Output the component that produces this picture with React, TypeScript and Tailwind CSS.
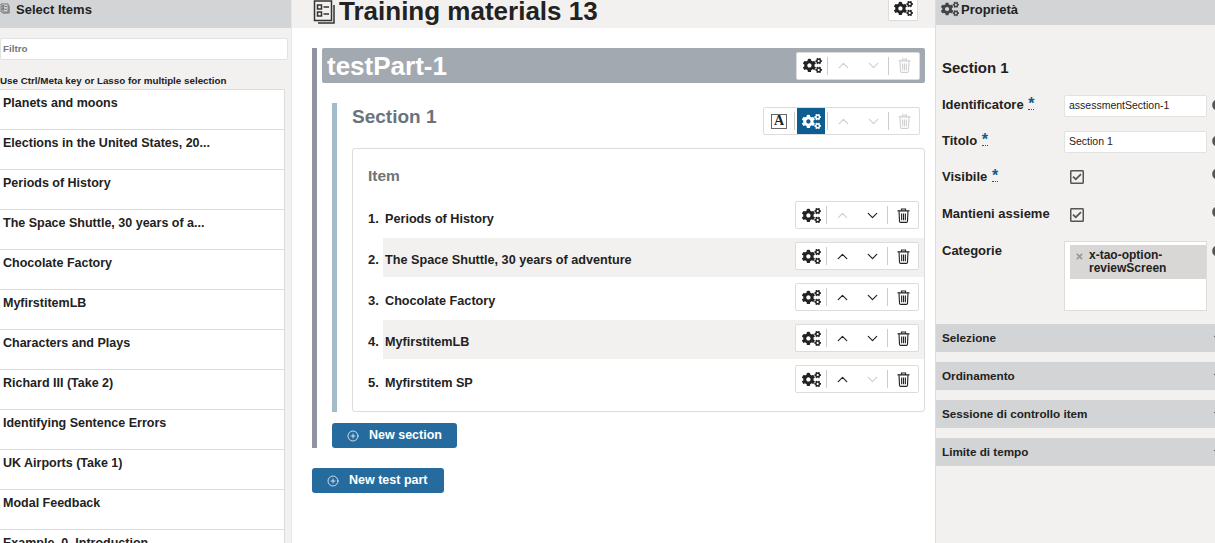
import { ChevronDown, ChevronUp, CirclePlus } from 'lucide-react';
import { FaCogs, FaQuestionCircle, FaRegCheckSquare, FaTimes } from 'react-icons/fa';

const libraryItems = [
  'Planets and moons',
  'Elections in the United States, 20...',
  'Periods of History',
  'The Space Shuttle, 30 years of a...',
  'Chocolate Factory',
  'MyfirstitemLB',
  'Characters and Plays',
  'Richard III (Take 2)',
  'Identifying Sentence Errors',
  'UK Airports (Take 1)',
  'Modal Feedback',
  'Example_0_Introduction',
];

const testItems = [
  { label: 'Periods of History', up: false, down: true },
  { label: 'The Space Shuttle, 30 years of adventure', up: true, down: true, striped: true },
  { label: 'Chocolate Factory', up: true, down: true },
  { label: 'MyfirstitemLB', up: true, down: true, striped: true },
  { label: 'Myfirstitem SP', up: true, down: false },
];

function ListIcon({ className }: { className: string }) {
  return (
    <svg viewBox="0 0 24 24" fill="none" stroke="currentColor" strokeWidth="1.5" className={className}>
      <path d="M22 5v18H6" />
      <path d="M2.5 1h17v19.5h-17z" />
      <path d="M5.5 5h4v4h-4zM5.5 12h4v4h-4zM11.5 7H17M11.5 14H17" />
    </svg>
  );
}

function TrashIcon({ className }: { className: string }) {
  return (
    <svg viewBox="0 0 14 16" fill="none" stroke="currentColor" strokeWidth="1.2" className={className}>
      <path d="M4.8 2.6V1h4.4v1.6" />
      <path d="M.6 3h12.8" strokeWidth="1.4" />
      <path d="M2.2 3.4l.5 10.8q.1 1.2 1.2 1.2h6.2q1.1 0 1.2-1.2l.5-10.8" />
      <path d="M5 5.8v7.4M7 5.8v7.4M9 5.8v7.4" />
    </svg>
  );
}

function Toolbar({ up, down, trash, active, text }: { up: boolean; down: boolean; trash: boolean; active?: boolean; text?: boolean }) {
  return (
    <div className={text ? 'flex h-[28px] w-[157px] shrink-0 items-center rounded-[2px] border border-[#dcdcdc] bg-white' : 'flex h-[28px] w-[124px] shrink-0 items-center rounded-[2px] border border-[#dcdcdc] bg-white'}>
      {text && (
        <>
          <div className="flex w-[30px] justify-center">
            <span className="flex h-[15px] w-[16px] items-center justify-center border border-[#666] font-['Liberation_Serif',serif] text-[14px] leading-none font-bold text-[#222]">A</span>
          </div>
          <div className="h-[18px] w-px bg-[#ccc]" />
        </>
      )}
      <div className={active ? 'mx-[2px] flex h-full w-[28px] items-center justify-center bg-[#0e5d91] text-white' : 'flex h-full w-[30px] items-center justify-center text-[#222]'}>
        <FaCogs className="h-[19px] w-[19px]" />
      </div>
      <div className="h-[18px] w-px bg-[#ccc]" />
      <div className="flex w-[60px] items-center justify-around">
        <ChevronUp className={up ? 'h-[17px] w-[17px] text-[#222]' : 'h-[17px] w-[17px] text-[#d0d0d0]'} strokeWidth={1.7} />
        <ChevronDown className={down ? 'h-[17px] w-[17px] text-[#222]' : 'h-[17px] w-[17px] text-[#d0d0d0]'} strokeWidth={1.7} />
      </div>
      <div className="h-[18px] w-px bg-[#ccc]" />
      <div className="flex flex-1 items-center justify-center">
        <TrashIcon className={trash ? 'h-[15px] w-[13px] text-[#222]' : 'h-[15px] w-[13px] text-[#d0d0d0]'} />
      </div>
    </div>
  );
}

function Required() {
  return <span className="ml-[1px] inline-block h-[15px] border-b border-dotted border-[#0e5d91] text-[16px] leading-[18px] text-[#0e5d91]">*</span>;
}

function HelpMark() {
  return <FaQuestionCircle className="mt-[4px] ml-[5px] h-[12px] w-[12px] shrink-0 text-[#555]" />;
}

function Field({ label, value }: { label: string; value: string }) {
  return (
    <div className="flex h-[36px] items-start">
      <label className="w-[122px] shrink-0 text-[13px] leading-[18px] font-bold text-[#222]">
        {label} <Required />
      </label>
      <div className="flex h-[22px] w-[143px] shrink-0 items-center rounded-[2px] border border-[#e2e2e2] bg-white px-[4px] text-[10.5px] text-[#222]">{value}</div>
      <HelpMark />
    </div>
  );
}

function CheckRow({ label, required }: { label: string; required?: boolean }) {
  return (
    <div className={required ? 'flex h-[38px] items-start' : 'flex h-[36px] items-start'}>
      <div className="w-[127px] shrink-0 text-[13px] leading-[18px] font-bold text-[#222]">
        {label} {required && <Required />}
      </div>
      <FaRegCheckSquare className="mt-[2px] h-[16px] w-[16px] shrink-0 text-[#555]" />
      <FaQuestionCircle className="mt-[1px] ml-[127px] h-[12px] w-[12px] shrink-0 text-[#555]" />
    </div>
  );
}

function Accordion({ label }: { label: string }) {
  return (
    <div className="flex h-[28px] items-center justify-between bg-[#d3d4d6] pl-[6px] text-[11.7px] font-bold text-[#222]">
      {label}
      <ChevronDown className="-mr-[9px] h-[12px] w-[12px] shrink-0" strokeWidth={2.5} />
    </div>
  );
}

export default function App() {
  return (
    <div className="flex h-[543px] w-[1215px] overflow-hidden bg-white font-['Liberation_Sans',Arial,sans-serif]">
      <aside className="flex w-[292px] shrink-0 flex-col overflow-hidden border-r border-[#e6e6e6] bg-[#f3f1ef]">
        <div className="flex h-[28px] w-full shrink-0 items-start gap-[6px] bg-[#d3d4d6] pt-[1px] text-[13px] leading-[18px] font-bold text-[#222]">
          <ListIcon className="mt-[1px] h-[13px] w-[10px] shrink-0 text-[#444]" />
          <span>Select Items</span>
        </div>
        <div className="w-[285px]">
          <div className="mt-[10px] flex h-[22px] w-[288px] items-center rounded-[2px] border border-[#e2e2e2] bg-white pl-[2px] text-[9.8px] font-bold text-[#777]">Filtro</div>
          <p className="mt-[15px] text-[9.8px] leading-[12px] font-bold whitespace-nowrap text-[#222]">Use Ctrl/Meta key or Lasso for multiple selection</p>
          <ul className="mt-[2px] w-[285px] border-t border-r border-[#dcdcdc] bg-white">
            {libraryItems.map((item) => (
              <li key={item} className="h-[40px] border-b border-[#dcdcdc] pt-[4px] pl-[3px] text-[12.5px] leading-[18px] font-bold text-[#222]">
                {item}
              </li>
            ))}
          </ul>
        </div>
      </aside>

      <main className="flex w-[643px] shrink-0 flex-col overflow-hidden">
        <header className="flex h-[28px] shrink-0 items-start justify-between bg-[#f3f1ef] pr-[17px] pl-[20px]">
          <div className="flex items-start">
            <ListIcon className="h-[24px] w-[24px] shrink-0 text-[#333]" />
            <h1 className="ml-[3px] text-[26px] leading-[23px] font-bold whitespace-nowrap text-[#222]">Training materials 13</h1>
          </div>
          <div className="flex h-[21px] w-[30px] items-center justify-center rounded-b-[2px] border border-t-0 border-[#dcdcdc] bg-white pb-[3px] text-[#222]">
            <FaCogs className="h-[19px] w-[19px]" />
          </div>
        </header>

        <section className="mt-[20px] ml-[20px] h-[400px] w-[613px] border-l-[5px] border-[#8f949e] pl-[5px]">
          <div className="flex h-[35px] w-[603px] items-center justify-between rounded-[2px] bg-[#a3a9b0] pr-[5px] pl-[5px]">
            <h2 className="pt-[2px] text-[26px] leading-[33px] font-bold text-white">testPart-1</h2>
            <Toolbar up={false} down={false} trash={false} />
          </div>

          <div className="mt-[20px] ml-[10px] h-[309px] w-[593px] border-l-[5px] border-[#a4bcc9] pl-[15px]">
            <div className="flex h-[45px] items-start justify-between pr-[5px]">
              <h3 className="pt-[2px] text-[19px] leading-[24px] font-bold text-[#69737d]">Section 1</h3>
              <div className="mt-[4px]">
                <Toolbar up={false} down={false} trash={false} active text />
              </div>
            </div>

            <div className="h-[264px] rounded-[3px] border border-[#dcdcdc]">
              <div className="pt-[18px] pl-[15px] text-[15.5px] leading-[18px] font-bold text-[#6f7378]">Item</div>
              <ol className="mt-[12px]">
                {testItems.map((item, i) => (
                  <li key={item.label} className="flex h-[41px] items-start pl-[15px]">
                    <span className="w-[15px] pt-[13px] text-[13px] leading-[18px] font-bold text-[#222]">{i + 1}.</span>
                    <div className={item.striped ? 'flex h-[39px] flex-1 items-start justify-between bg-[#f3f1ef] pr-[5px] pl-[2px]' : 'flex h-[39px] flex-1 items-start justify-between pr-[5px] pl-[2px]'}>
                      <span className="pt-[13px] text-[12.65px] leading-[18px] font-bold text-[#222]">{item.label}</span>
                      <div className="mt-[4px]">
                        <Toolbar up={item.up} down={item.down} trash />
                      </div>
                    </div>
                  </li>
                ))}
              </ol>
            </div>
          </div>

          <button className="mt-[11px] ml-[10px] flex h-[25px] w-[125px] items-center gap-[10px] rounded-[3px] bg-[#266b9e] pl-[15px] text-[12.5px] font-bold text-white">
            <CirclePlus className="h-[12px] w-[12px]" strokeWidth={1.5} />
            New section
          </button>
        </section>

        <button className="mt-[20px] ml-[20px] flex h-[25px] w-[132px] items-center gap-[10px] rounded-[3px] bg-[#266b9e] pl-[15px] text-[12.5px] font-bold text-white">
          <CirclePlus className="h-[12px] w-[12px]" strokeWidth={1.5} />
          New test part
        </button>
      </main>

      <aside className="w-[280px] shrink-0 overflow-hidden border-l border-[#dcdcdc] bg-[#f3f1ef]">
        <div className="flex h-[25px] items-start gap-[2px] bg-[#d3d4d6] pl-[5px] text-[13px] leading-[18px] font-bold text-[#222]">
          <FaCogs className="h-[18px] w-[18px] text-[#444]" />
          <span className="pt-[1px]">Proprietà</span>
        </div>
        <div className="pl-[6px]">
          <h4 className="mt-[33px] text-[15px] leading-[20px] font-bold text-[#222]">Section 1</h4>
          <div className="mt-[17px]">
            <Field label="Identificatore" value="assessmentSection-1" />
            <Field label="Titolo" value="Section 1" />
            <CheckRow label="Visibile" required />
            <CheckRow label="Mantieni assieme" />
          </div>
          <div className="flex h-[83px] items-start">
            <div className="w-[122px] shrink-0 pt-[1px] text-[13px] leading-[18px] font-bold text-[#222]">Categorie</div>
            <div className="h-[70px] w-[143px] shrink-0 border border-[#dcdcdc] bg-white pt-[3px] pl-[5px]">
              <div className="flex h-[34px] w-[136px] items-start gap-[5px] bg-[#d8d7d5] pt-[4px] pl-[5px]">
                <FaTimes className="mt-[3px] h-[9px] w-[9px] shrink-0 text-[#999]" />
                <span className="text-[12px] leading-[13px] font-bold text-[#222]">x-tao-option-reviewScreen</span>
              </div>
            </div>
            <HelpMark />
          </div>
        </div>
        <div className="flex flex-col gap-[10px]">
          <Accordion label="Selezione" />
          <Accordion label="Ordinamento" />
          <Accordion label="Sessione di controllo item" />
          <Accordion label="Limite di tempo" />
        </div>
      </aside>
    </div>
  );
}
